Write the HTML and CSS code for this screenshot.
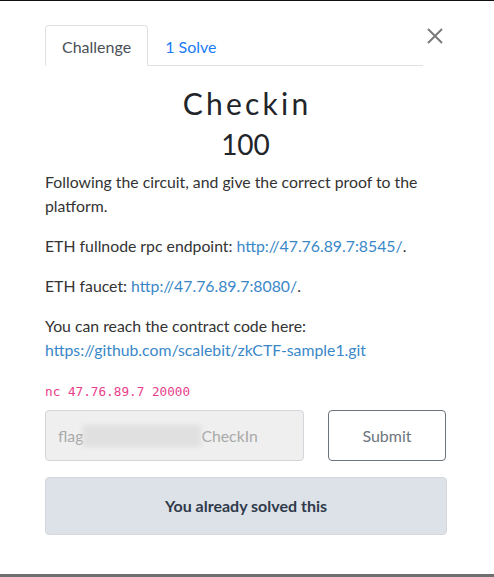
FILE: index.html
```html
<!DOCTYPE html>
<html lang="en">
<head>
  <meta charset="UTF-8">
  <meta name="viewport" content="width=device-width, initial-scale=1.0" />
  <title>Checkin</title>
  <link rel="stylesheet" href="styles.css">
</head>
<body>
  <div class="modal">
    <div class="modal-body">

      <div class="cabecalho">
        <nav class="tabs">
          <a class="tab ativo" href="#challenge">Challenge</a>
          <a class="tab" href="#solves">1 Solve</a>
        </nav>
        <button class="fechar" aria-label="Close">
          <svg width="16" height="16" viewBox="0 0 16 16">
            <path d="M1 1 L15 15 M15 1 L1 15" stroke="#7a7a7a" stroke-width="2" fill="none"/>
          </svg>
        </button>
      </div>

      <h2 class="titulo">Checkin</h2>
      <h3 class="pontos">100</h3>

      <div class="descricao">
        <p>Following the circuit, and give the correct proof to the platform.</p>
        <p>ETH fullnode rpc endpoint: <a href="#">http://47.76.89.7:8545/</a>.</p>
        <p>ETH faucet: <a href="#">http://47.76.89.7:8080/</a>.</p>
        <p>You can reach the contract code here:<br><a href="#">https://github.com/scalebit/zkCTF-sample1.git</a></p>
      </div>

      <code class="conexao">nc 47.76.89.7 20000</code>

      <form class="envio">
        <div class="campo">
          <span>flag</span><span class="borrado"></span><span>CheckIn</span>
        </div>
        <button type="button" class="enviar">Submit</button>
      </form>

      <div class="resolvido">You already solved this</div>
    </div>
  </div>
</body>
</html>
```

FILE: styles.css
```css
* {
  margin: 0;
  padding: 0;
  box-sizing: border-box;
}

body {
  font-family: 'Lato', sans-serif;
  color: #333333;
  background-color: white;
}

.modal {
  height: 577px;
  border-top: 1px solid #111;
  border-bottom: 3px solid #6f6f6f;
  background-color: white;
}

.modal-body {
  padding: 24px 48px 0 45px;
}

.cabecalho {
  display: flex;
  align-items: flex-start;
}

.tabs {
  display: flex;
  width: 378px;
  border-bottom: 1px solid #dee2e6;
}

.tab {
  display: block;
  height: 41px;
  padding: 0 16px;
  line-height: 41px;
  font-size: 16px;
  color: #1a7cf5;
  text-decoration: none;
  border: 1px solid transparent;
  border-radius: 4px 4px 0 0;
  margin-bottom: -1px;
}

.tab.ativo {
  color: #495057;
  border-color: #dee2e6 #dee2e6 white;
  background-color: white;
}

.fechar {
  margin: 3px 0 0 4px;
  background: none;
  border: none;
  width: 16px;
  height: 16px;
}

.titulo {
  margin-top: 17px;
  text-align: center;
  font-size: 30px;
  font-weight: 400;
  letter-spacing: 3.2px;
  text-indent: 3.2px;
  color: #212529;
  line-height: 41px;
}

.pontos {
  text-align: center;
  font-size: 28px;
  font-weight: 400;
  color: #212529;
  line-height: 40px;
}

.descricao {
  margin-top: 6px;
  font-size: 15.8px;
  line-height: 24px;
  color: #333;
}

.descricao p {
  margin-bottom: 16px;
}

.descricao a {
  color: #3a87c8;
  text-decoration: none;
}

.conexao {
  display: block;
  margin-top: 22px;
  font-family: 'DejaVu Sans Mono', monospace;
  font-size: 12.7px;
  color: #e83e8c;
}

.envio {
  display: flex;
  justify-content: space-between;
  margin-top: 11px;
}

.campo {
  display: flex;
  align-items: center;
  width: 259px;
  height: 51px;
  padding: 0 12px;
  background-color: #efefef;
  border: 1px solid #d2d6da;
  border-radius: 4px;
  font-size: 15.8px;
  color: #a9a9a9;
}

.borrado {
  width: 118px;
  height: 22px;
  background-color: #e0e0e0;
  filter: blur(2px);
}

.enviar {
  width: 118px;
  height: 51px;
  background-color: white;
  border: 1px solid #6c757d;
  border-radius: 4px;
  font-family: 'Lato', sans-serif;
  font-size: 16px;
  color: #6c757d;
}

.resolvido {
  margin-top: 16px;
  width: 402px;
  height: 58px;
  line-height: 56px;
  text-align: center;
  background-color: #dde1e8;
  border: 1px solid #d3d8de;
  border-radius: 4px;
  font-size: 16px;
  font-weight: 700;
  color: #2f3a4a;
}
```
